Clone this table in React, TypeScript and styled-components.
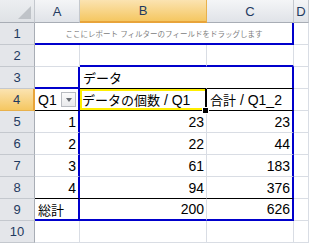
import styled, { createGlobalStyle, css } from "styled-components";

const GlobalStyle = createGlobalStyle`
  html, body {
    margin: 0;
    padding: 0;
    background: #ffffff;
    overflow: hidden;
  }
  body {
    font-family: "Liberation Sans", "Noto Sans CJK JP", sans-serif;
  }
`;

const GRID = "#d9dde4";
const BLUE = "#0000cc";
const BLACK = "#000000";

type Edge = "grid" | "blue" | "black" | "none";

const edge = (e: Edge | undefined) => {
  switch (e) {
    case "blue":
      return `2px solid ${BLUE}`;
    case "black":
      return `1px solid ${BLACK}`;
    case "none":
      return "1px solid transparent";
    default:
      return `1px solid ${GRID}`;
  }
};

const Sheet = styled.div`
  display: grid;
  grid-template-columns: 35px 45px 127px 87px 15px;
  grid-template-rows: 23px repeat(10, 22px);
  width: 309px;
  height: 244px;
  background: #ffffff;
`;

const ColHead = styled.div<{ $active?: boolean }>`
  display: flex;
  align-items: center;
  justify-content: center;
  box-sizing: border-box;
  font-size: 13px;
  color: #1f3a60;
  border-right: 1px solid #c4c8ce;
  border-bottom: 1px solid #a8adb5;
  background: linear-gradient(#f4f5f7, #e0e3e8);
  ${({ $active }) =>
    $active &&
    css`
      background: linear-gradient(#fbe3b1, #f5c761);
      border-right-color: #e8b14c;
      border-bottom: 2px solid #e8a43a;
    `}
`;

const Corner = styled(ColHead)`
  position: relative;
  background: linear-gradient(#eceef1, #dfe2e6);
  &::after {
    content: "";
    position: absolute;
    right: 3px;
    bottom: 3px;
    border-style: solid;
    border-width: 0 0 13px 13px;
    border-color: transparent transparent #bfc3c8 transparent;
  }
`;

const RowHead = styled.div<{ $active?: boolean }>`
  display: flex;
  align-items: center;
  justify-content: center;
  box-sizing: border-box;
  font-size: 13px;
  color: #1f3a60;
  background: #e4e6ea;
  border-right: 1px solid #a8adb5;
  border-bottom: 1px solid #c4c8ce;
  ${({ $active }) =>
    $active &&
    css`
      background: linear-gradient(#fbe3b1, #f5c761);
      border-right: 2px solid #e8a43a;
      border-bottom-color: #e8b14c;
    `}
`;

const Cell = styled.div<{
  $right?: Edge;
  $bottom?: Edge;
  $align?: "left" | "right" | "center";
  $span?: number;
}>`
  position: relative;
  display: flex;
  align-items: center;
  justify-content: ${({ $align }) =>
    $align === "right" ? "flex-end" : $align === "center" ? "center" : "flex-start"};
  box-sizing: border-box;
  padding: 0 2px 0 3px;
  font-size: 14px;
  color: #000;
  white-space: nowrap;
  border-right: ${({ $right }) => edge($right)};
  border-bottom: ${({ $bottom }) => edge($bottom)};
  grid-column: span ${({ $span }) => $span ?? 1};
`;

// Japanese labels render a touch smaller than the Latin digits
const Jp = styled.span`
  font-size: 13px;
`;

const FilterHint = styled(Cell)`
  font-size: 7.5px;
  color: #808080;
  overflow: hidden;
`;

const SelectedCell = styled(Cell)`
  box-shadow: inset 2px 2px 0 #ffee00, inset 0 -2px 0 #ffee00;
  border-right: 2px solid ${BLACK};
  padding-left: 2px;
`;

const FillHandle = styled.span`
  position: absolute;
  right: -4px;
  bottom: -4px;
  width: 5px;
  height: 5px;
  background: #000;
  border: 1px solid #fff;
  z-index: 2;
`;

const FilterButton = styled.span`
  margin-left: auto;
  width: 15px;
  height: 15px;
  box-sizing: border-box;
  border: 1px solid #b9bcc1;
  background: linear-gradient(#fbfbfb, #e9eaec);
  display: flex;
  align-items: center;
  justify-content: center;
  &::before {
    content: "";
    border-style: solid;
    border-width: 4px 3.5px 0 3.5px;
    border-color: #6a6e74 transparent transparent transparent;
  }
`;

const rows = [
  { n: 1, q: 23, sum: 23 },
  { n: 2, q: 22, sum: 44 },
  { n: 3, q: 61, sum: 183 },
  { n: 4, q: 94, sum: 376 },
];

export default function App() {
  return (
    <>
      <GlobalStyle />
      <Sheet>
        {/* column headers */}
        <Corner />
        <ColHead>A</ColHead>
        <ColHead $active>B</ColHead>
        <ColHead>C</ColHead>
        <ColHead>D</ColHead>

        {/* 1: report filter drop zone */}
        <RowHead>1</RowHead>
        <FilterHint $span={3} $align="center" $right="blue" $bottom="blue">
          ここにレポート フィルターのフィールドをドラッグします
        </FilterHint>
        <Cell />

        {/* 2 */}
        <RowHead>2</RowHead>
        <Cell />
        <Cell $bottom="blue" />
        <Cell $bottom="blue" />
        <Cell />

        {/* 3: data caption */}
        <RowHead>3</RowHead>
        <Cell $right="blue" $bottom="blue" />
        <Cell $right="none" $bottom="black">
          <Jp>データ</Jp>
        </Cell>
        <Cell $right="blue" $bottom="black" />
        <Cell />

        {/* 4: field headers */}
        <RowHead $active>4</RowHead>
        <Cell $right="blue" $bottom="black">
          Q1
          <FilterButton />
        </Cell>
        <SelectedCell $bottom="black">
          <Jp>データの個数</Jp>&nbsp;/ Q1
          <FillHandle />
        </SelectedCell>
        <Cell $right="blue" $bottom="black">
          <Jp>合計</Jp>&nbsp;/ Q1_2
        </Cell>
        <Cell />

        {rows.map((r, i) => (
          <Row key={r.n} index={i + 5} {...r} last={i === rows.length - 1} />
        ))}

        {/* 9: grand total */}
        <RowHead>9</RowHead>
        <Cell $right="blue" $bottom="blue">
          <Jp>総計</Jp>
        </Cell>
        <Cell $align="right" $bottom="blue">200</Cell>
        <Cell $align="right" $right="blue" $bottom="blue">626</Cell>
        <Cell />

        {/* 10 */}
        <RowHead>10</RowHead>
        <Cell />
        <Cell />
        <Cell />
        <Cell />
      </Sheet>
    </>
  );
}

function Row({
  index,
  n,
  q,
  sum,
  last,
}: {
  index: number;
  n: number;
  q: number;
  sum: number;
  last: boolean;
}) {
  const bottom: Edge = last ? "black" : "grid";
  return (
    <>
      <RowHead>{index}</RowHead>
      <Cell $align="right" $right="blue" $bottom={bottom}>{n}</Cell>
      <Cell $align="right" $bottom={bottom}>{q}</Cell>
      <Cell $align="right" $right="blue" $bottom={bottom}>{sum}</Cell>
      <Cell />
    </>
  );
}
